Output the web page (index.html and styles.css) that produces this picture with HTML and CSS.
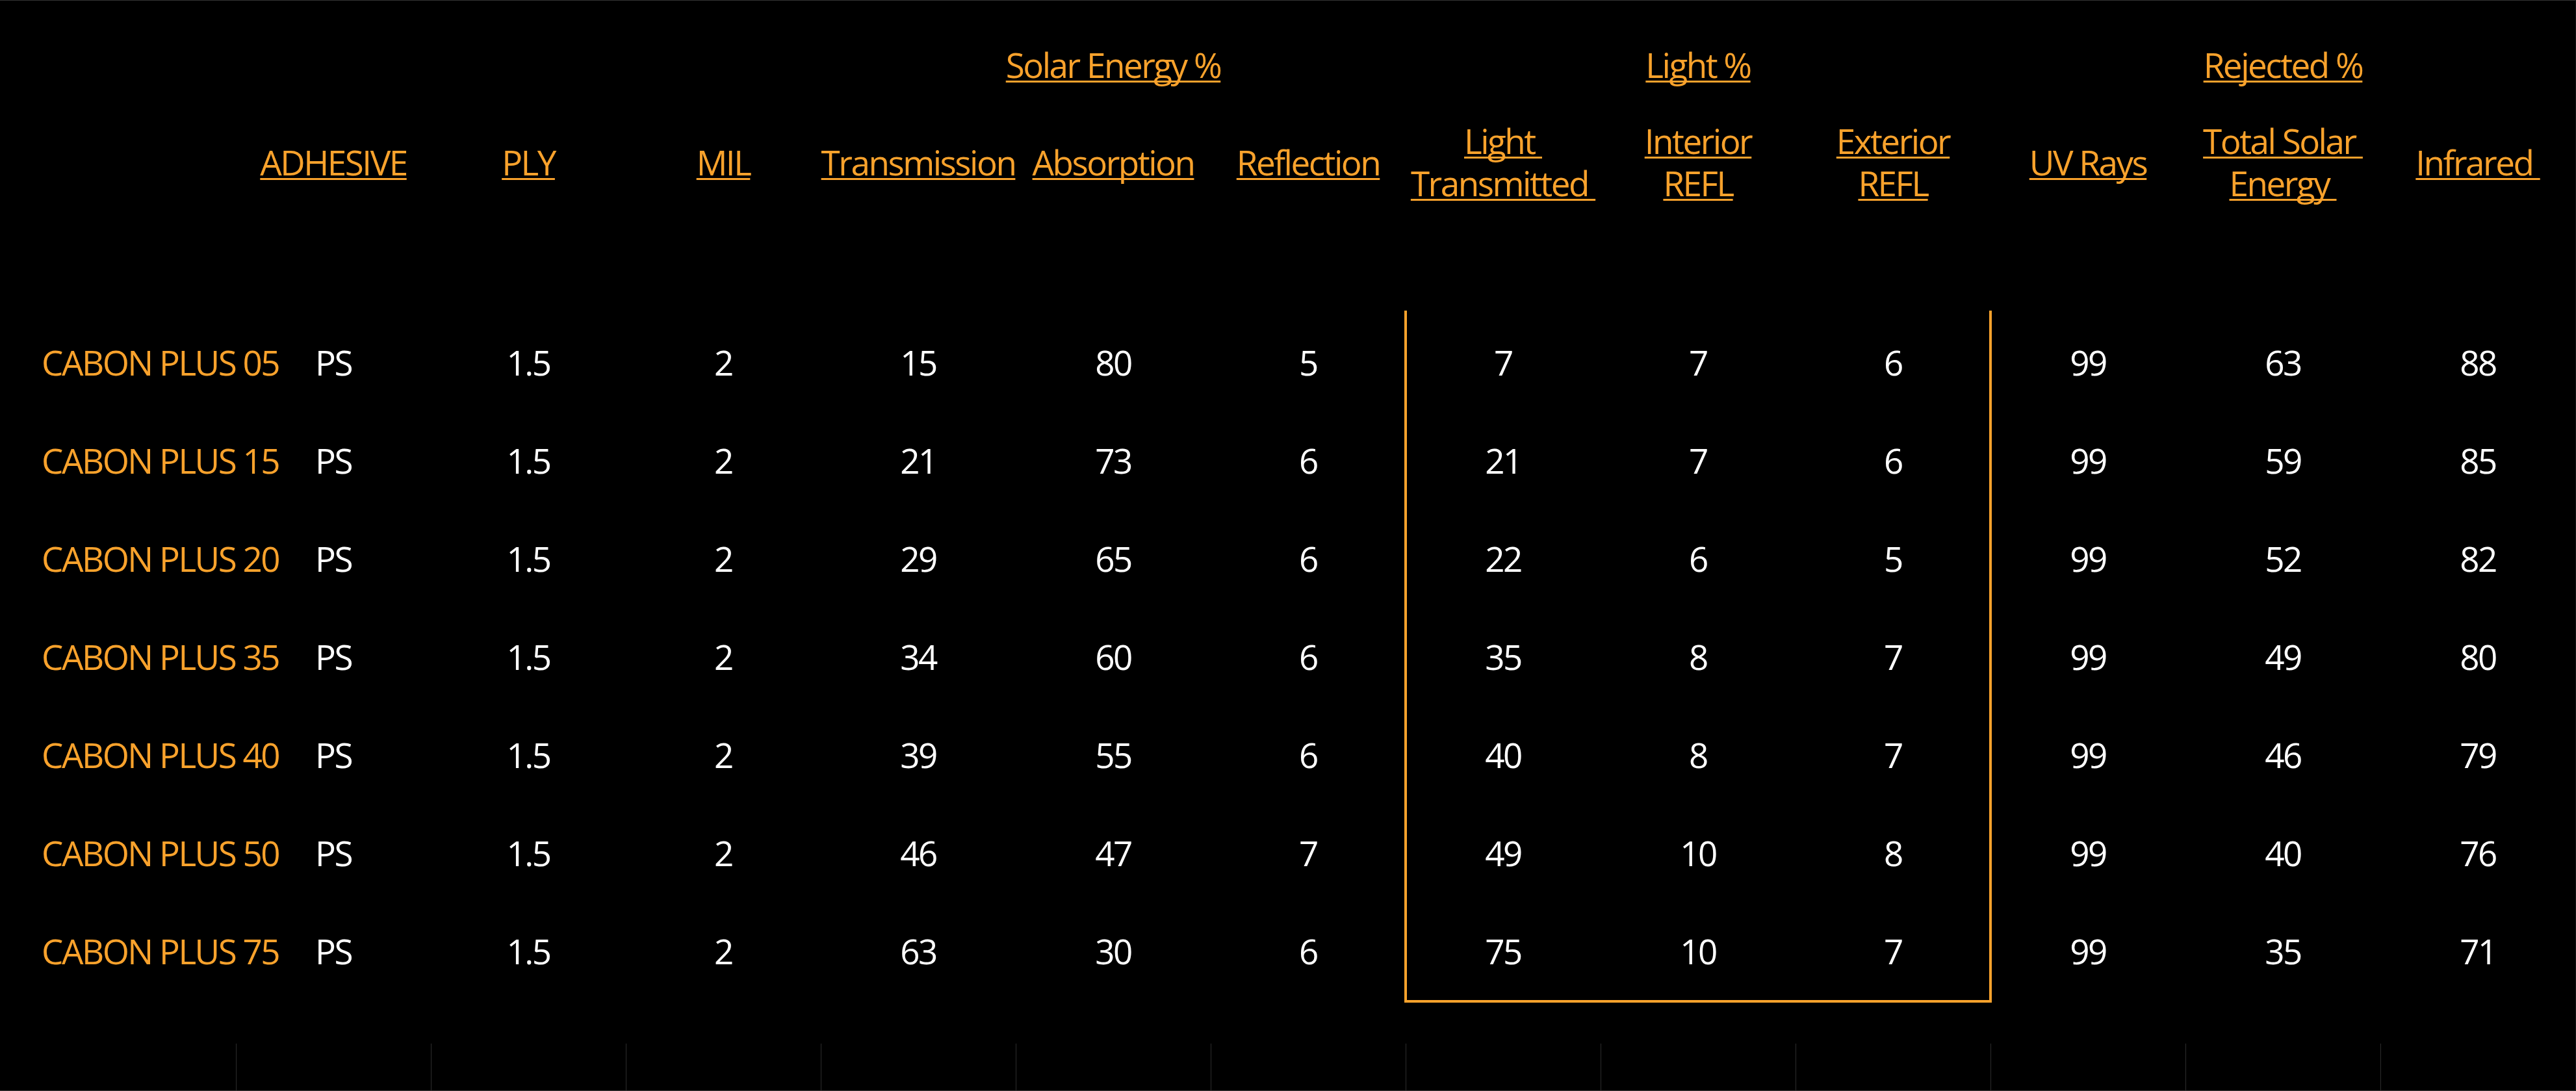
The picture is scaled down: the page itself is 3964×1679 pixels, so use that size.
FILE: index.html
```html
<!DOCTYPE html>
<html lang="en">
<head>
<meta charset="utf-8">
<title>Cabon Plus – Specifications</title>
<link rel="stylesheet" href="styles.css">
</head>
<body>
<main class="page">
  <div class="grid groups">
    <div class="group g-solar"><span class="ul">Solar Energy %</span></div>
    <div class="group g-light"><span class="ul">Light %</span></div>
    <div class="group g-rej"><span class="ul">Rejected %</span></div>
  </div>

  <div class="grid heads">
    <div class="head"></div>
    <div class="head"><span class="ul">ADHESIVE</span></div>
    <div class="head"><span class="ul">PLY</span></div>
    <div class="head"><span class="ul">MIL</span></div>
    <div class="head"><span class="ul">Transmission</span></div>
    <div class="head"><span class="ul">Absorption</span></div>
    <div class="head"><span class="ul">Reflection</span></div>
    <div class="head"><span class="ul">Light&nbsp;<br>Transmitted&nbsp;</span></div>
    <div class="head"><span class="ul">Interior<br>REFL</span></div>
    <div class="head"><span class="ul">Exterior<br>REFL</span></div>
    <div class="head"><span class="ul">UV Rays</span></div>
    <div class="head"><span class="ul">Total Solar&nbsp;<br>Energy&nbsp;</span></div>
    <div class="head"><span class="ul">Infrared&nbsp;</span></div>
  </div>

  <div class="data-wrap">
    <div class="grid data">
      <div class="name">CABON PLUS 05</div><div>PS</div><div>1.5</div><div>2</div><div>15</div><div>80</div><div>5</div><div>7</div><div>7</div><div>6</div><div>99</div><div>63</div><div>88</div>
      <div class="name">CABON PLUS 15</div><div>PS</div><div>1.5</div><div>2</div><div>21</div><div>73</div><div>6</div><div>21</div><div>7</div><div>6</div><div>99</div><div>59</div><div>85</div>
      <div class="name">CABON PLUS 20</div><div>PS</div><div>1.5</div><div>2</div><div>29</div><div>65</div><div>6</div><div>22</div><div>6</div><div>5</div><div>99</div><div>52</div><div>82</div>
      <div class="name">CABON PLUS 35</div><div>PS</div><div>1.5</div><div>2</div><div>34</div><div>60</div><div>6</div><div>35</div><div>8</div><div>7</div><div>99</div><div>49</div><div>80</div>
      <div class="name">CABON PLUS 40</div><div>PS</div><div>1.5</div><div>2</div><div>39</div><div>55</div><div>6</div><div>40</div><div>8</div><div>7</div><div>99</div><div>46</div><div>79</div>
      <div class="name">CABON PLUS 50</div><div>PS</div><div>1.5</div><div>2</div><div>46</div><div>47</div><div>7</div><div>49</div><div>10</div><div>8</div><div>99</div><div>40</div><div>76</div>
      <div class="name">CABON PLUS 75</div><div>PS</div><div>1.5</div><div>2</div><div>63</div><div>30</div><div>6</div><div>75</div><div>10</div><div>7</div><div>99</div><div>35</div><div>71</div>
    </div>
    <div class="grid frame-layer">
      <div class="frame"></div>
    </div>
  </div>

  <div class="grid tail">
    <div></div><div></div><div></div><div></div><div></div><div></div><div></div><div></div><div></div><div></div><div></div><div></div><div></div>
  </div>
</main>
</body>
</html>
```
FILE: styles.css
```css
html, body {
  margin: 0;
  padding: 0;
  background: #000;
}

.page {
  width: 3963px;
  height: 1677px;
  border-top: 1px solid #343434;
  border-bottom: 1px solid #3a3a3a;
  border-right: 1px solid #141414;
  background: #000;
  color: #fff;
  font-family: "Open Sans", "Noto Sans", sans-serif;
  font-size: 53px;
  letter-spacing: -2.5px;
  line-height: 65px;
  overflow: hidden;
}

.grid {
  display: grid;
  grid-template-columns: 363px repeat(12, 300px);
}

.ul {
  color: #f9a22c;
  text-decoration: underline;
  text-decoration-color: #f9a22c;
  text-decoration-thickness: 3px;
  text-underline-offset: 4px;
  text-decoration-skip-ink: none;
  white-space: nowrap;
}

/* group header row */
.groups {
  margin-top: 66px;
  height: 65px;
}
.group { text-align: center; }
.g-solar { grid-column: 5 / 8; }
.g-light { grid-column: 8 / 11; }
.g-rej { grid-column: 11 / 14; }

/* column header row */
.heads {
  margin-top: 52px;
  height: 130px;
  align-items: center;
}
.head { text-align: center; }

/* data */
.data-wrap {
  display: grid;
  margin-top: 168px;
}
.data-wrap > .grid {
  grid-area: 1 / 1;
}
.data {
  grid-auto-rows: 151px;
  align-items: center;
  text-align: center;
  white-space: nowrap;
}
.data .name {
  text-align: left;
  padding-left: 64px;
  color: #f9a22c;
}

.frame-layer {
  pointer-events: none;
}
.frame {
  grid-column: 8 / 11;
  margin: -4px -2px -4px -2px;
  border: 4px solid #f9a22c;
  border-top: 0;
}

/* trailing empty row with faint column rules */
.tail {
  margin-top: 67px;
  height: 72px;
}
.tail > div + div {
  border-left: 1px solid #2c2c2c;
}
```
